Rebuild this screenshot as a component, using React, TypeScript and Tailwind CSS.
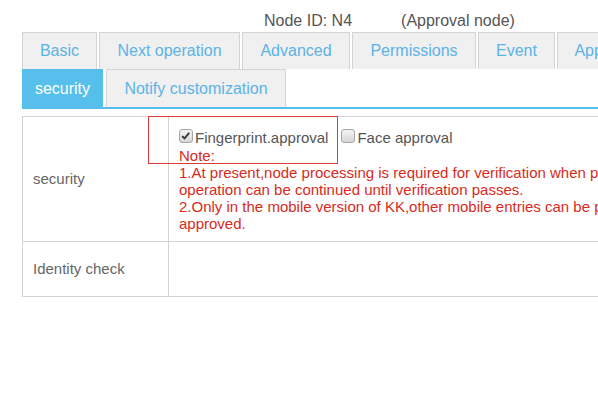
import type { ReactNode } from "react";

const tabs = [
  { label: "Basic", w: "w-[75px]" },
  { label: "Next operation", w: "w-[141px]" },
  { label: "Advanced", w: "w-[108px]" },
  { label: "Permissions", w: "w-[124px]" },
  { label: "Event", w: "w-[77px]" },
  { label: "Approval", w: "w-[98px]" },
];

function Box({ checked, children }: { checked?: boolean; children: ReactNode }) {
  return (
    <label className="inline-flex items-center gap-[2px]">
      <span className="relative mt-[-4px] inline-block h-[14px] w-[14px] rounded-[3px] border border-[#a6a6a6] bg-gradient-to-b from-[#f4f4f4] to-[#d6d6d6]">
        {checked && (
          <svg viewBox="0 0 14 14" className="absolute left-[0px] top-[0px] h-[12px] w-[12px]">
            <path d="M2.5 7.2 L5.3 9.8 L10.8 3.2" fill="none" stroke="#333" strokeWidth="2.2" />
          </svg>
        )}
      </span>
      <span className="text-[#555]">{children}</span>
    </label>
  );
}

export default function App() {
  return (
    <div className="relative h-[401px] w-[598px] overflow-hidden bg-white font-['Liberation_Sans',Arial,sans-serif]">
      <div className="flex h-[32px] items-end whitespace-nowrap pb-[1px] pl-[264px] text-[16px] leading-[20px] text-[#555]">
        <span>Node ID: N4</span>
        <span className="ml-[49px]">(Approval node)</span>
      </div>

      <div className="ml-[22px] flex gap-[2px] whitespace-nowrap">
        {tabs.map((t) => (
          <div
            key={t.label}
            className={`${t.w} h-[37px] shrink-0 border border-b-0 border-[#d4d4d4] bg-[#f0f0f0] text-center text-[16px] leading-[36px] text-[#5cb3e6]`}
          >
            {t.label}
          </div>
        ))}
      </div>

      <div className="ml-[22px] flex gap-[3px] whitespace-nowrap">
        <div className="h-[38px] w-[81px] bg-[#56bfec] text-center text-[16px] leading-[39px] text-white">security</div>
        <div className="h-[38px] w-[180px] border border-b-0 border-[#d4d4d4] bg-[#f0f0f0] text-center text-[16px] leading-[37px] text-[#5cb3e6]">
          Notify customization
        </div>
      </div>
      <div className="ml-[22px] h-[2px] bg-[#56bfec]" />

      <div className="ml-[22px] mt-[7px] grid w-[720px] grid-cols-[146px_1fr] border-l border-t border-[#d4d4d4] text-[15px] text-[#666]">
        <div className="flex h-[125px] items-center border-b border-r border-[#d4d4d4] pl-[10px]">security</div>
        <div className="h-[125px] border-b border-[#d4d4d4] pl-[10px] pt-[11px] whitespace-nowrap">
          <div className="flex h-[19px] items-center gap-[13px] leading-[19px]">
            <Box checked>Fingerprint.approval</Box>
            <Box>Face approval</Box>
          </div>
          <div className="leading-[17px] text-[#d92b1c]">
            <div>Note:</div>
            <div>1.At present,node processing is required for verification when processing the approval, the</div>
            <div>operation can be continued until verification passes.</div>
            <div>2.Only in the mobile version of KK,other mobile entries can be processed after being</div>
            <div>approved.</div>
          </div>
        </div>
        <div className="flex h-[55px] items-center border-b border-r border-[#d4d4d4] pl-[10px]">Identity check</div>
        <div className="h-[55px] border-b border-[#d4d4d4]" />
      </div>

      <div className="pointer-events-none absolute left-[148px] top-[116px] h-[48px] w-[190px] border border-[#e03a3a]" />
    </div>
  );
}
